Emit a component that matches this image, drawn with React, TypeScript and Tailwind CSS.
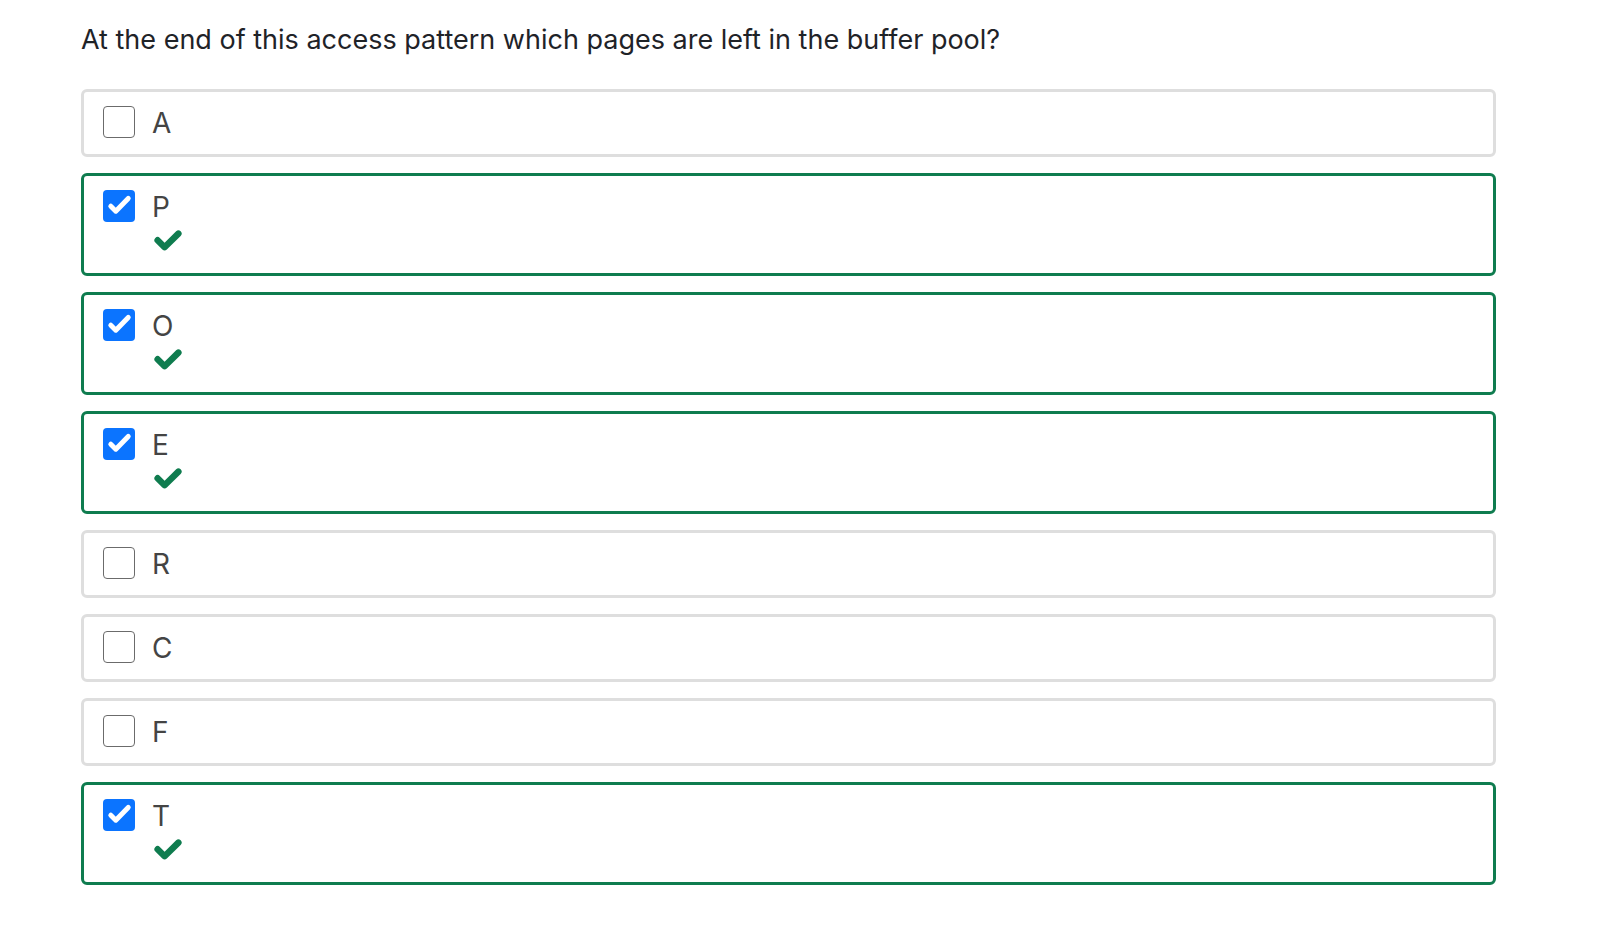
const OPTIONS = [
  { label: 'A', checked: false },
  { label: 'P', checked: true },
  { label: 'O', checked: true },
  { label: 'E', checked: true },
  { label: 'R', checked: false },
  { label: 'C', checked: false },
  { label: 'F', checked: false },
  { label: 'T', checked: true },
];

function CorrectIcon() {
  return (
    <svg width="28" height="22" viewBox="0 0 28 22" aria-hidden className="block">
      <path
        d="M3.6 10.2 L10.6 17.2 L24.4 3.6"
        fill="none"
        stroke="#0f7c4f"
        strokeWidth="6.4"
        strokeLinecap="round"
        strokeLinejoin="round"
      />
    </svg>
  );
}

function Checkbox({ checked }: { checked: boolean }) {
  if (!checked) {
    return <span className="block h-8 w-8 shrink-0 rounded-[4px] border-[1.5px] border-[#6b6b6b] bg-white" />;
  }
  return (
    <span className="flex h-8 w-8 shrink-0 items-center justify-center rounded-[4px] bg-[#0b74ff]">
      <svg width="32" height="32" viewBox="0 0 32 32" aria-hidden>
        <path
          d="M7.8 16.2 L12.8 21.2 L25.2 8.4"
          fill="none"
          stroke="#fff"
          strokeWidth="5"
          strokeLinecap="round"
          strokeLinejoin="round"
        />
      </svg>
    </span>
  );
}

function Option({ label, checked }: { label: string; checked: boolean }) {
  return (
    <div
      className={
        checked
          ? 'rounded-[6px] border-[3px] border-[#0f7c4f] bg-white pt-[14px] pb-[14px] pl-[19px]'
          : 'rounded-[6px] border-[3px] border-[#dedede] bg-white pt-[14px] pb-[14px] pl-[19px]'
      }
    >
      <div className="flex items-start gap-[17px]">
        <Checkbox checked={checked} />
        <div className="flex flex-col">
          <span className="text-[28px] leading-[34px] text-[#444444]">{label}</span>
          {checked && (
            <div className="h-[35px] pt-[6px] pl-[2px]">
              <CorrectIcon />
            </div>
          )}
        </div>
      </div>
    </div>
  );
}

export default function App() {
  return (
    <div className="min-h-screen bg-white pt-5 font-['Inter',sans-serif]">
      <div className="ml-[81px] w-[1415px]">
        <p className="mb-[30px] text-[27px] leading-[39px] text-[#1f2328]">
          At the end of this access pattern which pages are left in the buffer pool?
        </p>
        <div className="flex flex-col gap-4">
          {OPTIONS.map((o) => (
            <Option key={o.label} label={o.label} checked={o.checked} />
          ))}
        </div>
      </div>
    </div>
  );
}
